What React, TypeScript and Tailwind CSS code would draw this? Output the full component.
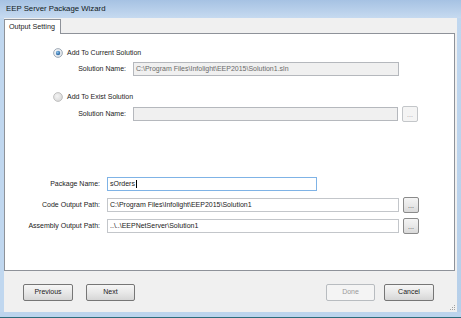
import React from "react";

const font = { fontFamily: '"Liberation Sans", Arial, sans-serif' };

function Radio({ checked }: { checked: boolean }) {
  return (
    <svg width="10" height="10" viewBox="0 0 10 10" className="shrink-0">
      <defs>
        <radialGradient id={checked ? "rg1" : "rg2"} cx="0.4" cy="0.4" r="0.7">
          <stop offset="0" stopColor={checked ? "#ffffff" : "#f4f4f4"} />
          <stop offset="1" stopColor={checked ? "#d8dde4" : "#d6d6d6"} />
        </radialGradient>
        <radialGradient id="dot" cx="0.4" cy="0.35" r="0.7">
          <stop offset="0" stopColor="#8ec4ee" />
          <stop offset="1" stopColor="#1d5a96" />
        </radialGradient>
      </defs>
      <circle cx="5" cy="5" r="4.4" fill={`url(#${checked ? "rg1" : "rg2"})`} stroke={checked ? "#8d9aa8" : "#b5b5b5"} strokeWidth="0.8" />
      {checked && <circle cx="5" cy="5" r="2.2" fill="url(#dot)" />}
    </svg>
  );
}

function Dots({ disabled }: { disabled?: boolean }) {
  return (
    <div
      className={`w-[16px] h-[16px] shrink-0 rounded-[2px] border flex items-end justify-center pb-[3px] text-[7px] leading-none ${
        disabled
          ? "border-[#c3c6c9] bg-[#f4f4f4] text-[#a0a0a0]"
          : "border-[#8a8a8a] bg-gradient-to-b from-[#f4f4f4] via-[#e9e9e9] to-[#d9d9d9] text-[#404040]"
      }`}
    >
      ...
    </div>
  );
}

function Btn({ label, disabled, w }: { label: string; disabled?: boolean; w: string }) {
  return (
    <div
      className={`${w} h-[17px] rounded-[2px] border flex items-center justify-center text-[7px] ${
        disabled
          ? "border-[#b8bcc0] bg-[#f4f4f4] text-[#9a9a9a]"
          : "border-[#767676] bg-gradient-to-b from-[#f6f6f6] via-[#e8e8e8] to-[#d6d6d6] text-[#1a1a1a]"
      }`}
    >
      {label}
    </div>
  );
}

export default function App() {
  return (
    <div
      className="w-[461px] h-[318px] bg-[#bcd4ed] flex flex-col overflow-hidden text-[#1a1a1a]"
      style={font}
    >
      {/* title bar */}
      <div className="h-[18px] shrink-0 bg-gradient-to-b from-[#a6c2e3] to-[#c6daf0] flex items-center pl-[6px] text-[7.8px] text-[#101820]">
        EEP Server Package Wizard
      </div>
      <div className="flex h-[294px] shrink-0">
        <div className="w-[4px] shrink-0 bg-[#c0d7ef]" />
        {/* client */}
        <div className="w-[453px] bg-[#f0f0f0] flex flex-col relative">
          {/* tab header */}
          <div className="h-[15px] shrink-0 flex items-end">
            <div className="w-[57px] h-[15px] bg-white border border-b-0 border-[#8e9299] relative -mb-[1px] z-10 flex items-center pl-[4px] text-[7.2px]">
              Output Setting
            </div>
          </div>
          {/* tab page */}
          <div className="w-[451px] h-[238px] shrink-0 bg-white border border-[#8e9299] flex flex-col text-[7px]">
            <div className="mt-[14px] h-[10px] flex items-center pl-[48px] gap-[4px]">
              <Radio checked />
              <span>Add To Current Solution</span>
            </div>
            <div className="mt-[4px] h-[14px] flex items-center">
              <span className="w-[121px] text-right shrink-0">Solution Name:</span>
              <div className="ml-[7px] w-[266px] h-[14px] border border-[#b5b8bd] bg-[#f0f0f0] flex items-center pl-[2px] text-[#6a6a6a]">
                C:\Program Files\Infolight\EEP2015\Solution1.sln
              </div>
            </div>
            <div className="mt-[16px] h-[10px] flex items-center pl-[48px] gap-[4px]">
              <Radio checked={false} />
              <span>Add To Exist Solution</span>
            </div>
            <div className="mt-[4px] h-[16px] flex items-center">
              <span className="w-[121px] text-right shrink-0">Solution Name:</span>
              <div className="ml-[7px] w-[265px] h-[14px] border border-[#b5b8bd] bg-[#f0f0f0]" />
              <div className="ml-[4px]">
                <Dots disabled />
              </div>
            </div>
            <div className="mt-[54px] h-[16px] flex items-center">
              <span className="w-[95px] text-right shrink-0">Package Name:</span>
              <div className="ml-[7px] w-[210px] h-[14px] border border-[#7fb3e6] bg-white flex items-center pl-[2px]">
                sOrders<span className="w-px h-[8px] bg-black ml-[1px]" />
              </div>
            </div>
            <div className="mt-[5px] h-[16px] flex items-center">
              <span className="w-[95px] text-right shrink-0">Code Output Path:</span>
              <div className="ml-[7px] w-[292px] h-[14px] border border-[#c3c6ca] bg-white flex items-center pl-[2px]">
                C:\Program Files\Infolight\EEP2015\Solution1
              </div>
              <div className="ml-[4px]">
                <Dots />
              </div>
            </div>
            <div className="mt-[5px] h-[16px] flex items-center">
              <span className="w-[95px] text-right shrink-0">Assembly Output Path:</span>
              <div className="ml-[7px] w-[292px] h-[14px] border border-[#c3c6ca] bg-white flex items-center pl-[2px]">
                ..\..\EEPNetServer\Solution1
              </div>
              <div className="ml-[4px]">
                <Dots />
              </div>
            </div>
          </div>
          {/* buttons */}
          <div className="mt-[13px] flex items-center pl-[19px] pr-[23px]">
            <Btn label="Previous" w="w-[50px]" />
            <div className="ml-[13px]">
              <Btn label="Next" w="w-[49px]" />
            </div>
            <div className="flex-1" />
            <Btn label="Done" disabled w="w-[49px]" />
            <div className="ml-[9px]">
              <Btn label="Cancel" w="w-[50px]" />
            </div>
          </div>
          <div className="absolute right-[2px] bottom-[2px] grid grid-cols-3 gap-[1px]">
            <span />
            <span />
            <span className="w-[1px] h-[1px] bg-[#a0a0a0]" />
            <span />
            <span className="w-[1px] h-[1px] bg-[#a0a0a0]" />
            <span className="w-[1px] h-[1px] bg-[#a0a0a0]" />
            <span className="w-[1px] h-[1px] bg-[#a0a0a0]" />
            <span className="w-[1px] h-[1px] bg-[#a0a0a0]" />
            <span className="w-[1px] h-[1px] bg-[#a0a0a0]" />
          </div>
        </div>
        <div className="w-[4px] shrink-0 bg-gradient-to-b from-[#c0d7ef] to-[#b6cfe9]" />
      </div>
      <div className="h-[5px] shrink-0 bg-[#bcd4ed]" />
      <div className="h-[1px] shrink-0 bg-[#2d6c7c]" />
    </div>
  );
}
